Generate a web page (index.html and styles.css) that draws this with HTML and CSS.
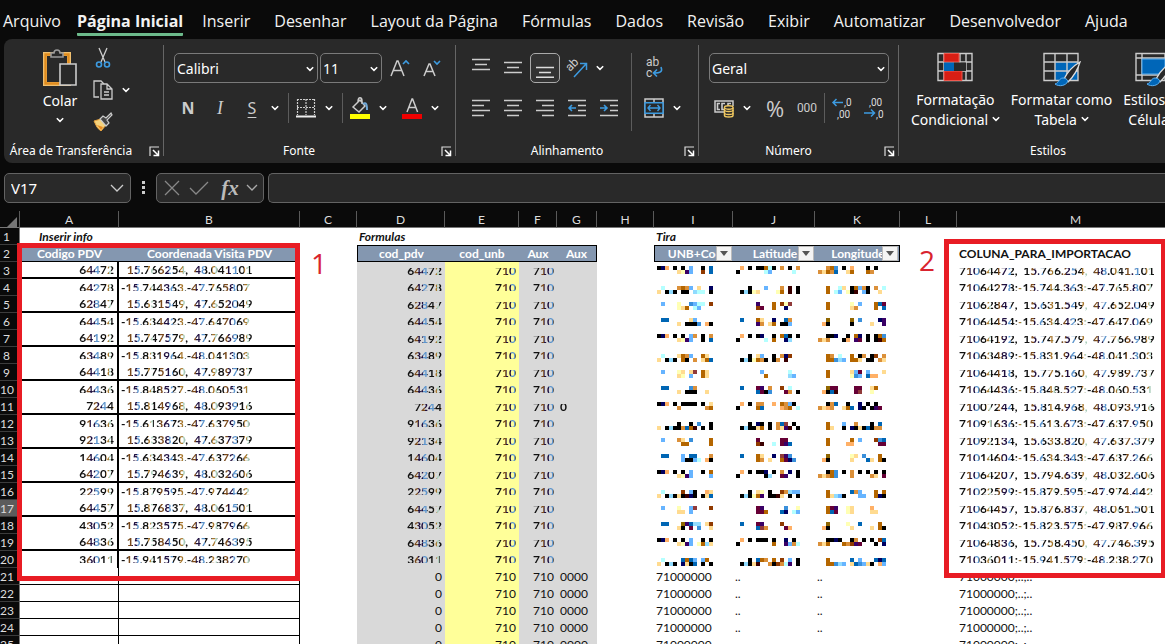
FILE: index.html
```html
<!DOCTYPE html>
<html lang="pt-BR">
<head>
<meta charset="utf-8">
<title>Planilha</title>
<link rel="stylesheet" href="styles.css">
</head>
<body>
<svg class="defs" aria-hidden="true">
  <symbol id="chev" viewBox="0 0 8 6"><path d="M.8 1.2 4 4.4 7.2 1.2" fill="none" stroke="#fff" stroke-width="1.5"/></symbol>
  <symbol id="launch" viewBox="0 0 11 11"><path d="M1 10V1h9" fill="none" stroke="#ddd" stroke-width="1.2"/><path d="m4 4 5 5M9.5 4.500V9.500H4.500" fill="none" stroke="#fff" stroke-width="1.5"/></symbol>
  <symbol id="brush" viewBox="0 0 28 26"><path d="M27 1C20 5 14 12 11 18l4 3C20 16 25 8 27 1Z" fill="#292929" stroke="#ddd" stroke-width="1.3"/><path d="M10 17c-4 0-4 5-8 6 4 3 11 2 13-3-1-2-3-3-5-3Z" fill="#0066b8" stroke="#5cb0f0"/></symbol>
</svg>

<nav class="tabs">
  <a href="#">Arquivo</a><a href="#" class="active">Página Inicial</a><a href="#">Inserir</a><a href="#">Desenhar</a><a href="#">Layout da Página</a><a href="#">Fórmulas</a><a href="#">Dados</a><a href="#">Revisão</a><a href="#">Exibir</a><a href="#">Automatizar</a><a href="#">Desenvolvedor</a><a href="#">Ajuda</a>
</nav>

<div class="ribbon">
  <section class="group clipboard">
    <div class="tools clip-tools">
      <button class="paste">
        <svg width="36" height="38" viewBox="0 0 36 38"><path d="M3 5h24v30H3z" fill="none" stroke="#f0c070" stroke-width="4"/><path d="M3.500 5.500h23v29h-23z" fill="none" stroke="#e08c1e" stroke-width="2.400"/><path d="M9 8h12V4h-3c0-4-6-4-6 0H9z" fill="#292929" stroke="#999" stroke-width="1.600"/><path d="M18 15h16v21H18z" fill="#292929" stroke="#ccc" stroke-width="1.600"/></svg>
        <span>Colar</span>
        <svg width="8" height="6"><use href="#chev"/></svg>
      </button>
      <div class="clip-side">
        <button class="icon" aria-label="Recortar"><svg width="16" height="20" viewBox="0 0 16 20"><path d="m4 0 6 14M12 0 6 14" fill="none" stroke="#ccc" stroke-width="1.300"/><circle cx="4" cy="16.500" r="2.500" fill="none" stroke="#3d9be0" stroke-width="1.600"/><circle cx="12" cy="16.500" r="2.500" fill="none" stroke="#3d9be0" stroke-width="1.600"/></svg></button>
        <div class="split"><button class="icon" aria-label="Copiar"><svg width="20" height="20" viewBox="0 0 20 20"><path d="M6 17H1V1h7l3 3" fill="none" stroke="#ccc" stroke-width="1.300"/><path d="M8 4h6l5 5v10H8zM14 4v5h5M11 12h5M11 15h5" fill="#292929" stroke="#ccc" stroke-width="1.300"/></svg></button><button class="caret" aria-label="Mais"><svg width="8" height="6"><use href="#chev"/></svg></button></div>
        <button class="icon" aria-label="Pincel de formatação"><svg width="20" height="20" viewBox="0 0 20 20"><path d="m1 9 7-2 5 6-5 6Q4 17 1 9Z" fill="#f5d27c" stroke="#e8a33d"/><path d="m4 13 6 2-2 3Z" fill="#e88a20"/><path d="m7 7 3-3 3 2 5-5 1 2-5 5 2 3-3 3Z" fill="#444" stroke="#ccc" stroke-width="1.200"/></svg></button>
      </div>
    </div>
    <footer><span>Área de Transferência</span><button aria-label="Abrir Área de Transferência"><svg width="11" height="11"><use href="#launch"/></svg></button></footer>
  </section>

  <section class="group font">
    <div class="tools">
      <div class="row">
        <label class="combo wide"><select aria-label="Fonte"><option>Calibri</option></select><svg width="8" height="6"><use href="#chev"/></svg></label>
        <label class="combo small"><select aria-label="Tamanho"><option>11</option></select><svg width="8" height="6"><use href="#chev"/></svg></label>
        <button class="icon" aria-label="Aumentar fonte"><svg width="20" height="20" viewBox="0 0 20 20"><path d="m1 18 6-15h1l6 15M3.500 12.500h8" fill="none" stroke="#ccc" stroke-width="1.500"/><path d="m13 6 3-3 3 3" fill="none" stroke="#3d9be0" stroke-width="1.600"/></svg></button>
        <button class="icon" aria-label="Diminuir fonte"><svg width="20" height="20" viewBox="0 0 20 20"><path d="m2 18 5-12h1l5 12M4 13.500h7" fill="none" stroke="#ccc" stroke-width="1.500"/><path d="m12 3 3 3 3-3" fill="none" stroke="#3d9be0" stroke-width="1.600"/></svg></button>
      </div>
      <div class="row">
        <button class="icon bold">N</button><button class="icon italic">I</button>
        <div class="split"><button class="icon under">S</button><button class="caret" aria-label="Mais"><svg width="8" height="6"><use href="#chev"/></svg></button></div>
        <i class="sep"></i>
        <div class="split"><button class="icon" aria-label="Bordas"><svg width="20" height="20" viewBox="0 0 20 20"><path d="M1 1.500h18M1.500 1v16M18.500 1v16M10 1v16M1 9.500h18" fill="none" stroke="#ccc" stroke-width="1.200" stroke-dasharray="2 1"/><path d="M0 18.500h20" stroke="#eee" stroke-width="2"/></svg></button><button class="caret" aria-label="Mais"><svg width="8" height="6"><use href="#chev"/></svg></button></div>
        <i class="sep"></i>
        <div class="split"><button class="icon" aria-label="Cor de preenchimento"><svg width="20" height="22" viewBox="0 0 20 22"><path d="m3 10 7-7 5 6-6 6ZM8 5c0-6 4-5 4-1v3" fill="none" stroke="#ccc" stroke-width="1.500"/><path d="M13 7c3-2 4 0 4 6" fill="none" stroke="#6fa8d8" stroke-width="2"/><path d="M0 17h20v5H0z" fill="#ff0"/></svg></button><button class="caret" aria-label="Mais"><svg width="8" height="6"><use href="#chev"/></svg></button></div>
        <div class="split next"><button class="icon" aria-label="Cor da fonte"><svg width="20" height="22" viewBox="0 0 20 22"><path d="m5 15 5-13h.6l5 13M7 10.500h7" fill="none" stroke="#ccc" stroke-width="1.500"/><path d="M0 17h20v5H0z" fill="#f00000"/></svg></button><button class="caret" aria-label="Mais"><svg width="8" height="6"><use href="#chev"/></svg></button></div>
      </div>
    </div>
    <footer><span>Fonte</span><button aria-label="Abrir Fonte"><svg width="11" height="11"><use href="#launch"/></svg></button></footer>
  </section>

  <section class="group align">
    <div class="tools">
      <div class="cols">
        <div class="rows">
          <div class="row">
            <button class="icon" aria-label="Alinhar em cima"><svg width="18" height="20" viewBox="0 0 18 20"><path d="M0 1.500h18M3 6.500h12M0 11.500h18" stroke="#ccc" stroke-width="1.500"/></svg></button>
            <button class="icon" aria-label="Alinhar no meio"><svg width="18" height="20" viewBox="0 0 18 20"><path d="M0 4.500h18M3 9.500h12M0 14.500h18" stroke="#ccc" stroke-width="1.500"/></svg></button>
            <button class="icon pressed" aria-label="Alinhar embaixo"><svg width="18" height="20" viewBox="0 0 18 20"><path d="M0 9.500h18M3 14.500h12M0 19.200h18" stroke="#ddd" stroke-width="1.500"/></svg></button>
            <div class="split"><button class="icon" aria-label="Orientação"><svg width="22" height="22" viewBox="0 0 22 22"><text x="4" y="15" transform="rotate(-45 4 15)" class="ico-text">ab</text><path d="M8 20 20 7M14 6.500h6.500V13" fill="none" stroke="#3d9be0" stroke-width="1.500"/></svg></button><button class="caret" aria-label="Mais"><svg width="8" height="6"><use href="#chev"/></svg></button></div>
          </div>
          <div class="row">
            <button class="icon" aria-label="Alinhar à esquerda"><svg width="18" height="18" viewBox="0 0 18 18"><path d="M0 1.500h18M0 6.500h12M0 11.500h18M0 16.500h12" stroke="#ccc" stroke-width="1.600"/></svg></button>
            <button class="icon" aria-label="Centralizar"><svg width="18" height="18" viewBox="0 0 18 18"><path d="M0 1.500h18M3 6.500h12M0 11.500h18M3 16.500h12" stroke="#ccc" stroke-width="1.600"/></svg></button>
            <button class="icon" aria-label="Alinhar à direita"><svg width="18" height="18" viewBox="0 0 18 18"><path d="M0 1.500h18M6 6.500h12M0 11.500h18M6 16.500h12" stroke="#ccc" stroke-width="1.600"/></svg></button>
            <button class="icon" aria-label="Diminuir recuo"><svg width="18" height="18" viewBox="0 0 18 18"><path d="M0 1.500h18M10 6.500h8M10 11.500h8M0 16.500h18" stroke="#ccc" stroke-width="1.600"/><path d="M8 9H1M4 6 1 9l3 3" fill="none" stroke="#3d9be0" stroke-width="1.600"/></svg></button>
            <button class="icon" aria-label="Aumentar recuo"><svg width="18" height="18" viewBox="0 0 18 18"><path d="M0 1.500h18M10 6.500h8M10 11.500h8M0 16.500h18" stroke="#ccc" stroke-width="1.600"/><path d="M0 9h7M4 6l3 3-3 3" fill="none" stroke="#3d9be0" stroke-width="1.600"/></svg></button>
          </div>
        </div>
        <i class="sep tall"></i>
        <div class="rows">
          <div class="row"><button class="icon" aria-label="Quebrar texto"><svg width="20" height="24" viewBox="0 0 20 24"><text x="2" y="10" class="ico-text">ab</text><text x="2" y="21" class="ico-text">c</text><path d="M17 11c2 5-1 6-7 6M13 13.500 9.500 17l3.500 3.500" fill="none" stroke="#3d9be0" stroke-width="1.600"/></svg></button></div>
          <div class="row"><div class="split"><button class="icon" aria-label="Mesclar e centralizar"><svg width="20" height="20" viewBox="0 0 20 20"><path d="M1 1h18v18H1zM10 1v4M10 15v4" fill="none" stroke="#ccc" stroke-width="1.500"/><path d="M1 4.800h18v10.400H1z" fill="#292929" stroke="#3d9be0" stroke-width="1.500"/><path d="M4 10h12M6.500 7 4 10l2.500 3M13.500 7l2.500 3-2.500 3" fill="none" stroke="#3d9be0" stroke-width="1.400"/></svg></button><button class="caret" aria-label="Mais"><svg width="8" height="6"><use href="#chev"/></svg></button></div></div>
        </div>
      </div>
    </div>
    <footer><span>Alinhamento</span><button aria-label="Abrir Alinhamento"><svg width="11" height="11"><use href="#launch"/></svg></button></footer>
  </section>

  <section class="group number">
    <div class="tools">
      <div class="row"><label class="combo full"><select aria-label="Formato"><option>Geral</option></select><svg width="8" height="6"><use href="#chev"/></svg></label></div>
      <div class="row">
        <div class="split"><button class="icon" aria-label="Formato contábil"><svg width="20" height="20" viewBox="0 0 20 20"><path d="M10 14H1V3h18v5" fill="none" stroke="#ccc" stroke-width="1.500"/><path d="M6 5.500H3.500v6H6M11 5.500H8v6h2M14 8V5.500h3" fill="none" stroke="#ccc" stroke-width="1.600"/><path d="M10.500 9.500v8c0 2 8.500 2 8.500 0v-8" fill="#292929" stroke="#f0c860" stroke-width="1.500"/><ellipse cx="14.750" cy="9.500" rx="4.250" ry="1.700" fill="#292929" stroke="#f0c860" stroke-width="1.400"/><path d="M10.500 12c0 2 8.500 2 8.500 0M10.500 15c0 2 8.500 2 8.500 0" fill="none" stroke="#f0c860" stroke-width="1.300"/></svg></button><button class="caret" aria-label="Mais"><svg width="8" height="6"><use href="#chev"/></svg></button></div>
        <button class="icon pct">%</button><button class="icon mil">000</button>
        <i class="sep tight"></i>
        <button class="icon" aria-label="Aumentar casas decimais"><svg width="22" height="24" viewBox="0 0 22 24"><text x="13" y="10" class="dec">,0</text><text x="6" y="22" class="dec">,00</text><path d="M12 6.500H2M5.500 3 2 6.500 5.500 10" fill="none" stroke="#3d9be0" stroke-width="1.500"/></svg></button>
        <button class="icon" aria-label="Diminuir casas decimais"><svg width="22" height="24" viewBox="0 0 22 24"><text x="6" y="10" class="dec">,00</text><text x="13" y="22" class="dec">,0</text><path d="M1 17h10.500M8 13.500l3.500 3.500L8 20.500" fill="none" stroke="#3d9be0" stroke-width="1.500"/></svg></button>
      </div>
    </div>
    <footer><span>Número</span><button aria-label="Abrir Número"><svg width="11" height="11"><use href="#launch"/></svg></button></footer>
  </section>

  <section class="group styles">
    <div class="tools big-tools">
      <button class="big"><svg width="36" height="36" viewBox="0 0 36 36"><path d="M1 1.500h34v27H1zM1 10h34M1 19h34M7 1v27M29 1v27M23 1v27" fill="none" stroke="#ccc" stroke-width="1.400"/><path d="M7 1.500h15V10H7zM7 19h18v9.500H7z" fill="#d81e14" stroke="#f05a50"/><path d="M7 10.500h10V19H7z" fill="#0066b8"/><path d="M17 10.500h12V19H17z" fill="#292929"/></svg><span>Formatação<br>Condicional <svg width="8" height="6"><use href="#chev"/></svg></span></button>
      <button class="big"><svg width="38" height="36" viewBox="0 0 38 36"><path d="M12 10h23v18.500H12z" fill="#0066b8"/><path d="M1 1.500h34v27H1zM1 10h34M1 19h34M12 1v27M24 1v27" fill="none" stroke="#ccc" stroke-width="1.400"/><svg x="10" y="9" width="28" height="26"><use href="#brush"/></svg></svg><span>Formatar como<br>Tabela <svg width="8" height="6"><use href="#chev"/></svg></span></button>
      <button class="big"><svg width="38" height="36" viewBox="0 0 38 36"><path d="M1 1.500h34v27H1zM1 6h34M1 23h34M7 1v27M30 1v27" fill="none" stroke="#ccc" stroke-width="1.400"/><path d="M7 7h23v15H7z" fill="#0066b8" stroke="#5cb0f0"/><svg x="10" y="9" width="28" height="26"><use href="#brush"/></svg></svg><span>Estilos de<br>Célula <svg width="8" height="6"><use href="#chev"/></svg></span></button>
    </div>
    <footer><span>Estilos</span></footer>
  </section>
</div>

<div class="formula-bar">
  <label class="namebox"><input aria-label="Caixa de nome" value="V17"><svg width="14" height="8" viewBox="0 0 14 8"><path d="m1 1 6 6 6-6" fill="none" stroke="#ccc" stroke-width="1.300"/></svg></label>
  <svg class="dots" width="3" height="14" viewBox="0 0 3 14"><path d="M0 0h3v3H0zM0 5h3v3H0zM0 10h3v3H0z" fill="#ccc"/></svg>
  <div class="fx-box">
    <button aria-label="Cancelar"><svg width="16" height="16" viewBox="0 0 16 16"><path d="m1 1 14 14M15 1 1 15" stroke="#888" stroke-width="1.300"/></svg></button>
    <button aria-label="Inserir"><svg width="20" height="14" viewBox="0 0 20 14"><path d="m1 7 6 6L19 1" fill="none" stroke="#888" stroke-width="1.300"/></svg></button>
    <button class="fx">fx</button>
    <button aria-label="Expandir"><svg width="12" height="8" viewBox="0 0 12 8"><path d="m1 1 5 5 5-5" fill="none" stroke="#aaa" stroke-width="1.300"/></svg></button>
  </div>
  <input class="formula" aria-label="Barra de fórmulas">
</div>

<main class="sheet">
  <table>
    <colgroup><col class="c-h"><col class="c-a"><col class="c-b"><col class="c-c"><col class="c-d"><col class="c-e"><col class="c-f"><col class="c-g"><col class="c-c"><col class="c-i"><col class="c-j"><col class="c-k"><col class="c-c"><col></colgroup>
    <thead><tr id="letters"></tr></thead>
    <tbody id="grid"></tbody>
  </table>
  <div class="mark mark-one"></div><div class="mark mark-two"></div>
  <span class="num num-one">1</span><span class="num num-two">2</span>
</main>
<script src="script.js"></script>
</body>
</html>
```
FILE: styles.css
```css
* { box-sizing: border-box; }
html, body { height: 100%; }
body {
  margin: 0;
  display: flex;
  flex-direction: column;
  overflow: hidden;
  background: #0a0a0a;
  color: #fff;
  font-family: "Noto Sans", "Open Sans", sans-serif;
  font-size: 14px;
}
button, input, select { font: inherit; color: inherit; background: none; border: 0; padding: 0; margin: 0; }
button { display: flex; align-items: center; justify-content: center; }
svg { flex: none; }
.defs { position: absolute; width: 0; height: 0; }

.tabs { display: flex; gap: 24px; height: 39px; padding: 9px 3px 0; flex: none; font-family: "Open Sans", sans-serif; }
.tabs a { height: 27px; line-height: 24px; font-size: 16px; color: #f2f2f2; text-decoration: none; white-space: nowrap; }
.tabs .active { font-weight: 700; border-bottom: 3px solid #6cba8b; margin: 0 -5px 0 -8px; border-radius: 1px; }

.ribbon { display: flex; flex: none; height: 124px; margin-left: 4px; background: #292929; border-radius: 8px 0 0 8px; overflow: hidden; }
.group { position: relative; flex: none; display: flex; flex-direction: column; padding: 14px 0 2px; }
.group:not(.styles)::after { content: ""; position: absolute; right: 0; top: 6px; bottom: 7px; width: 1px; background: #666; }
.clipboard { width: 160px; }
.font { width: 292px; padding-left: 8px; }
.align { width: 243px; padding-left: 9px; }
.number { width: 200px; padding-left: 9px; }
.styles { width: 296px; padding-left: 12px; }
.tools { flex: 1; display: flex; flex-direction: column; gap: 10px; }
.group footer { display: flex; align-items: center; height: 20px; font-size: 12px; line-height: 20px; margin-left: -10px; }
.group footer span { flex: 1; text-align: center; white-space: nowrap; }
.group footer button { width: 20px; }
.group.clipboard footer { margin-left: 0; }
.clipboard footer span { padding-right: 6px; }
.row { display: flex; align-items: center; height: 30px; }
.cols { display: flex; }
.rows { display: flex; flex-direction: column; gap: 10px; }
.icon { width: 32px; height: 30px; color: #ccc; }
.caret { width: 14px; height: 30px; }
.split { display: flex; }
.next { margin-left: 6px; }
.sep { width: 1px; height: 30px; margin: 0 1px 0 6px; background: #5c5c5c; }
.sep.tight { margin: 0 1px; }
.sep.tall { height: 78px; margin: 0 6px; }
.pressed { width: 30px; margin: 0 1px; border: 1px solid #aaa; border-radius: 5px; background: #333; }
.bold { font-weight: 700; font-size: 16px; }
.italic { font-family: "Liberation Serif", serif; font-style: italic; font-size: 18px; }
.under { font-size: 16px; text-decoration: underline; text-underline-offset: 3px; }
.pct { font-size: 22px; font-family: "Open Sans", sans-serif; margin-left: 5px; }
.mil { font-family: Roboto, sans-serif; font-size: 12px; }
.icon svg { overflow: visible; }
.ico-text { font: 12px/1 Roboto, sans-serif; font-size: 12px; fill: #ccc; }
.dec { font: 11px/1 Roboto, sans-serif; font-size: 10px; fill: #ddd; }

.combo { position: relative; display: flex; height: 30px; border: 1px solid #7a7a7a; border-radius: 5px; }
.combo select { appearance: none; width: 100%; padding-left: 2px; outline: 0; }
.combo svg { position: absolute; right: 3px; top: 12px; pointer-events: none; }
.wide { width: 144px; margin: 0 2px; }
.small { width: 62px; margin-right: 2px; }
.full { width: 180px; margin-left: 1px; }

.clip-tools { flex-direction: row; gap: 0; padding-left: 36px; }
.paste { flex-direction: column; justify-content: flex-start; width: 40px; margin-top: -4px; }
.paste span { line-height: 20px; margin: 4px 0 6px; }
.clip-side { display: flex; flex-direction: column; gap: 2px; margin: -10px 0 0 7px; }

.big-tools { flex-direction: row; gap: 11px; margin-top: -1px; }
.big { flex: none; flex-direction: column; justify-content: flex-start; white-space: nowrap; line-height: 20px; }
.big > span { margin-top: 2px; }
.big span svg { vertical-align: 3px; }

.formula-bar { display: flex; align-items: center; flex: none; height: 30px; margin: 10px 0 8px 4px; }
.namebox, .fx-box, .formula { height: 30px; background: #292929; border: 1px solid #636363; border-radius: 5px; }
.namebox { display: flex; align-items: center; width: 127px; padding: 0 6px; }
.namebox input { flex: 1; min-width: 0; font-size: 15px; }
.dots { margin: 0 11px; }
.fx-box { display: flex; align-items: center; width: 108px; margin: 0 4px 0 0; padding: 0 2px 0 7px; gap: 9px; }
.fx { width: 24px; font: italic 700 21px "Liberation Serif", serif; color: #bbb; }
.fx + button { margin-left: -5px; }
.formula { flex: 1; min-width: 0; border-right: 0; border-radius: 5px 0 0 5px; }

.sheet { position: relative; flex: 1; min-height: 0; overflow: hidden; font-family: Lato, sans-serif; font-size: 12px; color: #111; }
/* column M runs on past the window's right edge */
table { width: calc(100% + 30px); table-layout: fixed; border-collapse: separate; border-spacing: 0; background: #fff; }
.c-h { width: 20px; } .c-a { width: 99px; } .c-b { width: 181px; } .c-c { width: 57px; }
.c-d { width: 88px; } .c-e { width: 74px; } .c-f { width: 38px; } .c-g { width: 40px; }
.c-i { width: 79px; } .c-j { width: 82px; } .c-k { width: 85px; }
th, td { height: 17px; padding: 0 2px; line-height: 15px; white-space: pre; overflow: hidden; }
thead th { background: #0a0a0a; color: #ddd; font-weight: 400; border-right: 1px solid #5a5a5a; border-bottom: 1px solid #777; }
.corner { vertical-align: bottom; }
.corner svg { display: block; margin-left: 5px; }
tbody th { background: #0a0a0a; color: #ddd; font-weight: 400; font-size: 12px; padding: 0 6px 0 0; border-right: 1px solid #777; border-bottom: 1px solid #3c3c3c; }
tbody th.current { background: #5c5c5c; }
.title { font-weight: 700; font-style: italic; }
.title-a { padding-left: 19px; }
.head { background: #8497b0; color: #fff; font-weight: 700; text-align: center; border-top: 1px solid #000; border-bottom: 1px solid #000; }
.first { border-left: 1px solid #000; }
.last { border-right: 1px solid #000; }
.filter { position: relative; padding-right: 0; }
.filter button { position: absolute; right: 1px; top: 0; width: 16px; height: 15px; background: #f4f4f4; border: 1px solid #bbb; }
.r { text-align: right; padding-right: 3px; }
.box-a { border-right: 2px solid #000; }
.thick { border-bottom: 2px solid #000; }
.cell { border-right: 1px solid #000; border-bottom: 1px solid #000; }
.gray { background: #d9d9d9; }
.yellow { background: #ff9; }
.gray.g-text { padding-left: 3px; }
.blurred span { color: transparent; background: repeating-linear-gradient(90deg, #111 0 7px, #7a4a1c 7px 11px, #201040 11px 16px, #5c94cc 16px 20px, #111 20px 27px, #a87830 27px 30px, #a8ccb8 30px 32px); -webkit-background-clip: text; background-clip: text; font-weight: 700; }
.cut-top span { -webkit-mask-image: linear-gradient(transparent 5px, #000 5px); mask-image: linear-gradient(transparent 5px, #000 5px); }
.cut-low span { -webkit-mask-image: linear-gradient(#000 11px, transparent 11px); mask-image: linear-gradient(#000 11px, transparent 11px); }
.pix { padding: 0 0 0 3px; vertical-align: top; }
.pix svg { display: block; }
.wide-head { font-weight: 700; }
.mark { position: absolute; border: 5px solid #e81c24; }
.mark-one { left: 17px; top: 32px; width: 283px; height: 338px; }
.mark-two { left: 944px; top: 28px; right: -1px; height: 339px; }
.num { position: absolute; color: #d9232e; font-family: "Open Sans", sans-serif; font-size: 28px; line-height: 32px; }
.num-one { left: 311px; top: 36px; }
.num-two { left: 919px; top: 33px; }
```
FILE: script.js
```js
const palette = { k: '#000', n: '#000060', o: '#ffb066', b: '#0066b4', s: '#66b4ff', c: '#b4ffff', l: '#90dbff', y: '#ffffb4', t: '#ffdb90', w: '#903a00', g: '#b46600', d: '#db903a', p: '#3a0066', m: '#3a0000', e: '#3a90db', r: '#660036', x: '#903a3a', v: '#906600' };
const codes = ['64472','64278','62847','64454','64192','63489','64418','64436','7244','91636','92134','14604','64207','22599','64457','43052','64836','36011'];
const places = [
  ['15.766254','48.041101'],['15.744363','47.765807'],['15.631549','47.652049'],['15.634423','47.647069'],['15.747579','47.766989'],['15.831964','48.041303'],
  ['15.775160','47.989737'],['15.848527','48.060531'],['15.814968','48.093916'],['15.613673','47.637950'],['15.633820','47.637379'],['15.634343','47.637266'],
  ['15.794639','48.032606'],['15.879595','47.974442'],['15.876837','48.061501'],['15.823575','47.987966'],['15.758450','47.746395'],['15.941579','48.238270']];
const pixels = [
  ['kno.k.k.s..k.b','.....typs..w.b','.o.k.kkgck.d.k.d','k......cs.....c.','..dge.k.o...k.k..','dtgdb..tg...gd...'],
  ['.c...dgds.t..n','t.klk.kk.lcc.k','...k...s...d.m.k','.klkyt....yg.m.k','..g..ct.kgsdk.d.c','..g.cs.ykm.sk..t.'],
  ['.s...y..escc.w','.....ytg.cs...','.....p...g.wyx..','.....wr..g..n...','..g.....y.s...gbr','..g.....td....g.b'],
  ['.bb.....ts....','.....t.kkke.ok','.b...gt..n..bd..','.....pd.tg.kks..','..v.....v.e....np','.ok.....k....t..p'],
  ['kno.k.k.sd.k.d','.....typs..k.b','.o.k.kn..k.gbk.k','k......c.g..nl..','..kkn..k.gn.k.kge','dtd...ko.pr.k.kmg'],
  ['.c...tgds..gt.','t.klk.gk.d.tgb','...k.ts..k.dnw..','.klkygdk.kd.m...','..gd.c..g.kd.kw.d','..ggels.ggt.kk.dt'],
  ['.s...yt.tx.gt.','.....ty.s..gt.','......s......c..','.......g.....ls.','..g.....tsr.s...t','..g.....yes.boo..'],
  ['.bb.....ed....','.....t.kkk..t.','.b...rp.d..w.c..','.....brke...rd.k','..vrr....rr..tg..','.okbm....rx..y...'],
  ['kno.k.kkkk.k.t','.....d......dg','.o.k.dd..o.gdsk.','k....gb....odg.c','..kdb..k..n.k.k..','dtod..tgb.nk.kpr.'],
  ['.....k..k.e..k','t.klkkdbgm.k.k','...k.nk.k.dbx.k.','.klkktg.k.dtpm.k','..g...s..d...k.b.','..gt..k.nktkbkdd.'],
  ['.s...dt.e....g','......gg.....g','.....r.....rr...','.....wm..c.rpb..','..g.....g.s...web','..g....oo......rr'],
  ['.bb...s.bb...d','......skksc.ok','.b...gt..n.xpe..','.....gd.t..grne.','..v.....yt.e...g.','.ok.....t...bt.gk'],
  ['kno.k.k.s..k.g','.....typs....s','.o.k.kkn.k.d.n.k','k......kl..rp..k','..kge.k.d.k.k.k.k','dtdge...d....dt.r'],
  ['.c....w.sk..ot','t.klktkmnk.ktb','...k.ty.k..wdlss','.klkygp.kkmt.k.k','..g.....bds...g.g','..gtlsk...ss..gnk'],
  ['.s...y..sx...w','.....tt.s.....','.....rp.....e..y','.....rrg...bn.cs','..grp..yt....o...','..gbr..yt....tt..'],
  ['.bb...vpbll.tw','.....tk.r.e..t','.b...rp....w....','.....bxd....ro..','..v....y..b....g.','.ok.....t....t.gk'],
  ['kno.k.k.s..k.k','.....typs.yglt','.o.k.kkk.k..n.k.','k........g..psdc','..kknk..kd.k.k.wb','dtg...gdwpr...k.n'],
  ['.c....bgbs.sg.','t.klk.ntkb.k.k','...k.bgd.g.w.s.k','.klktm..dkwdcp.k','..g.....b.s...bnb','..ggels.tbestk.os']];

function cell(text, cls = '') {
  return `<td class="${cls}">${cls.includes('blurred') ? `<span>${text}</span>` : text}</td>`;
}
function pix(rows, top) {
  let rects = '';
  rows.forEach((line, y) => [...line].forEach((ch, x) => {
    if (palette[ch]) rects += `<rect x="${x * 4}" y="${y * 4 + top}" width="4" height="4" fill="${palette[ch]}"/>`;
  }));
  return `<td class="pix"><svg width="68" height="16" shape-rendering="crispEdges">${rects}</svg></td>`;
}
const dots = s => s.slice(0, 6) + '.' + s.slice(6);
const filter = '<button aria-label="Filtrar"><svg width="8" height="5"><path d="M0 0h8L4 5z" fill="#555"/></svg></button>';

document.getElementById('letters').innerHTML =
  '<th class="corner"><svg width="10" height="10"><path d="M10 0v10H0z" fill="#777"/></svg></th>' +
  [...'ABCDEFGHIJKLM'].map(c => `<th scope="col">${c}</th>`).join('');

let html = '';
for (let n = 1; n <= 25; n++) {
  html += `<tr><th scope="row" class="${n === 17 ? 'current' : ''}">${n}</th>`;
  if (n === 1) {
    html += cell('Inserir info', 'title title-a') + cell('') + cell('') + cell('Formulas', 'title') + cell('').repeat(4) + cell('Tira', 'title') + cell('').repeat(4);
  } else if (n === 2) {
    html += cell('Codigo PDV', 'head') + cell('Coordenada Visita PDV', 'head') + cell('') + cell('cod_pdv', 'head first') + cell('cod_unb', 'head') + cell('Aux', 'head') + cell('Aux', 'head last') + cell('');
    html += cell('UNB+Cod' + filter, 'head first filter') + cell('Latitude' + filter, 'head filter') + cell('Longitude' + filter, 'head last filter') + cell('') + cell('COLUNA_PARA_IMPORTACAO', 'wide-head');
  } else if (n <= 20) {
    const i = n - 3, odd = n % 2, [lat, lon] = places[i];
    const line = odd ? ' thick' : ' cut-low';
    const cut = odd ? ' cut-top' : ' cut-low';
    html += cell(codes[i], 'r box-a blurred' + line) + cell(odd ? `  ${lat},  ${lon}` : `-${lat},-${lon}`, 'blurred' + line) + cell('');
    html += cell(codes[i], 'r gray blurred' + cut) + cell('710', 'r yellow blurred' + cut) + cell('710', 'r gray blurred' + cut) + cell(n === 11 ? '0' : '', 'gray g-text blurred' + cut) + cell('');
    const top = [4, 7, 6, 5][i % 4], p = pixels[i];
    html += pix([p[0], p[1]], top) + pix([p[2], p[3]], top) + pix([p[4], p[5]], top) + cell('');
    const code = '710' + codes[i].padStart(5, '0');
    html += cell(odd ? `${code},  ${dots(lat)},  ${dots(lon)}` : `${code};-${dots(lat)};-${dots(lon)}`, 'blurred' + cut);
  } else {
    html += cell('', 'cell') + cell('', 'cell') + cell('') + cell('0', 'r gray') + cell('710', 'r yellow') + cell('710', 'r gray') + cell('0000', 'gray g-text') + cell('');
    html += cell('71000000') + cell('..', 'g-text') + cell('..', 'g-text') + cell('') + cell('71000000;..;..');
  }
  html += '</tr>';
}
document.getElementById('grid').innerHTML = html;
```
